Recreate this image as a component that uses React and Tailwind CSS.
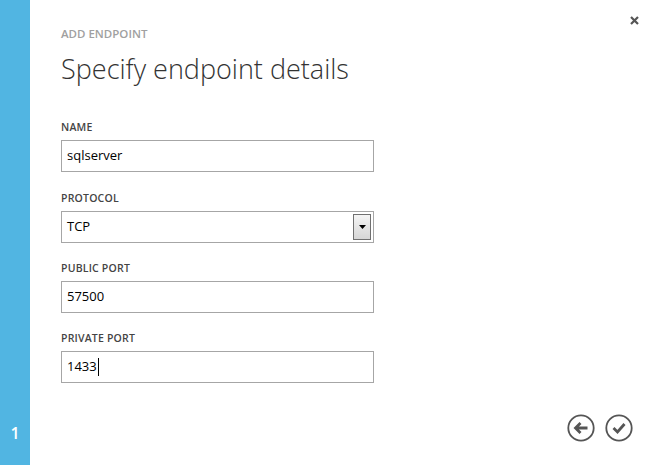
import React from "react";

const font = { fontFamily: '"Open Sans", "Liberation Sans", sans-serif' };

function Field({ label, children, className = "" }) {
  return (
    <div className={"flex flex-col " + className}>
      <div className="text-[10.5px] font-semibold text-[#444] leading-[14px] h-[14px] tracking-[0.2px]">{label}</div>
      <div className="mt-[6px]">{children}</div>
    </div>
  );
}

function TextBox({ value, caret }) {
  return (
    <div className="w-[313px] h-[32px] border border-[#a6a6a6] bg-white flex items-center pl-[5px] text-[13px] text-black">
      <span>{value}</span>
      {caret && <span className="inline-block w-px h-[18px] bg-black ml-px" />}
    </div>
  );
}

export default function App() {
  return (
    <div className="w-[652px] h-[465px] flex bg-white overflow-hidden" style={font}>
      <div className="w-[30px] h-full bg-[#51b5e2] flex flex-col justify-end pb-[24px] items-center">
        <span className="text-white text-[16px] font-semibold leading-none">1</span>
      </div>
      <div className="flex-1 relative flex flex-col">
        <button className="absolute right-[13px] top-[15px] w-[10px] h-[10px] flex items-center justify-center">
          <svg width="9" height="9" viewBox="0 0 9 9">
            <path d="M1 1 L8 8 M8 1 L1 8" stroke="#555" strokeWidth="2.2" />
          </svg>
        </button>
        <div className="pl-[31px] pt-[27px] flex flex-col">
          <div className="text-[11.5px] font-semibold text-[#a0a0a0] leading-[14px]">ADD ENDPOINT</div>
          <div className="mt-[10px] text-[27px] font-light text-[#333] leading-[36px]">Specify endpoint details</div>
          <div className="mt-[33px] flex flex-col">
            <Field label="NAME">
              <TextBox value="sqlserver" />
            </Field>
            <Field label="PROTOCOL" className="mt-[19px]">
              <div className="w-[313px] h-[32px] border border-[#a6a6a6] bg-white flex items-center justify-between pl-[5px] pr-[2px] text-[13px] text-black">
                <span>TCP</span>
                <div className="w-[18px] h-[26px] border border-[#707070] bg-gradient-to-b from-[#f4f4f4] to-[#d6d6d6] flex items-center justify-center">
                  <svg width="7" height="4" viewBox="0 0 7 4">
                    <path d="M0 0 H7 L3.5 4 Z" fill="#000" />
                  </svg>
                </div>
              </div>
            </Field>
            <Field label="PUBLIC PORT" className="mt-[18px]">
              <TextBox value="57500" />
            </Field>
            <Field label="PRIVATE PORT" className="mt-[18px]">
              <TextBox value="1433" caret />
            </Field>
          </div>
        </div>
        <div className="mt-auto flex justify-end gap-[10px] pr-[19px] pb-[23px]">
          <svg width="28" height="28" viewBox="0 0 28 28">
            <circle cx="14" cy="14" r="12.7" fill="none" stroke="#555" strokeWidth="1.8" />
            <path d="M20.5 14 H8.5 M13.5 9 L8.5 14 L13.5 19" fill="none" stroke="#555" strokeWidth="2.8" strokeLinejoin="miter" />
          </svg>
          <svg width="28" height="28" viewBox="0 0 28 28">
            <circle cx="14" cy="14" r="12.7" fill="none" stroke="#555" strokeWidth="1.8" />
            <path d="M8.5 14 L12.5 18 L19.5 10" fill="none" stroke="#555" strokeWidth="2.8" />
          </svg>
        </div>
      </div>
    </div>
  );
}
